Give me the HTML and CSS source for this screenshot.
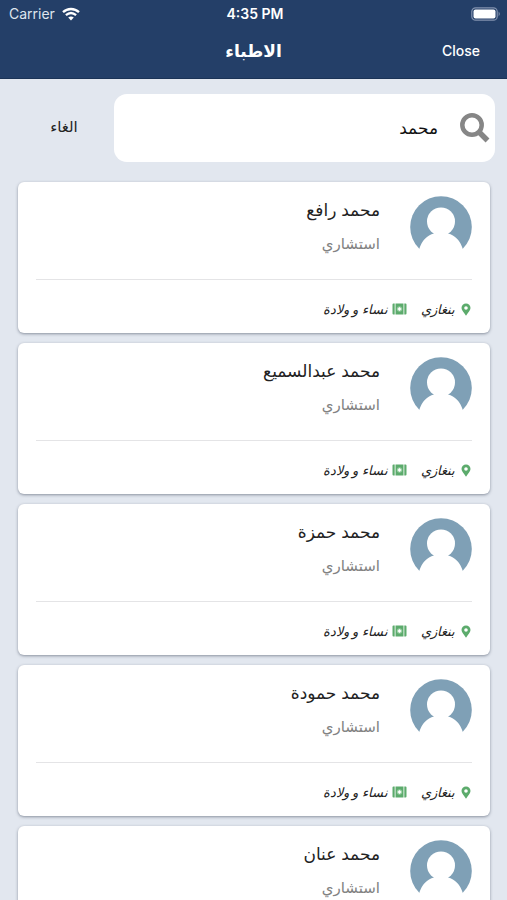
FILE: index.html
```html
<!DOCTYPE html>
<html lang="ar" dir="rtl">
<head>
<meta charset="utf-8">
<meta name="viewport" content="width=device-width, initial-scale=1">
<title>الاطباء</title>
<link rel="stylesheet" href="styles.css">
</head>
<body>
<svg class="sprite" aria-hidden="true">
  <symbol id="avatar" viewBox="0 0 62 62">
    <circle cx="31" cy="31" r="30.8" fill="#7fa0b6"/>
    <circle cx="31" cy="25.500" r="14" fill="#fff"/>
    <path d="M9 53.500C12 44 17 39.500 24 37.500V34H38V37.500C45 39.500 50 44 53 53.500V62H9Z" fill="#fff"/>
  </symbol>
  <symbol id="pin" viewBox="0 0 10 13">
    <path fill-rule="evenodd" fill="#5cab6c" d="M5 0.500A4.500 4.500 0 0 0 .5 5C.5 7.500 3 9.500 5 12.700C7 9.500 9.500 7.500 9.500 5A4.500 4.500 0 0 0 5 .5ZM5 3.200A1.800 1.800 0 1 1 5 6.800A1.800 1.800 0 0 1 5 3.200Z"/>
  </symbol>
  <symbol id="kit" viewBox="0 0 14 12">
    <path fill="#5cab6c" d="M0 1.500Q0 .5 1 .5H2.200V11.500H1Q0 11.500 0 10.500ZM11.800 .5H13Q14 .5 14 1.500V10.500Q14 11.500 13 11.500H11.800ZM3 .5H11V11.500H3Z"/>
    <circle cx="7" cy="6" r="2.700" fill="#8fcb9b"/>
    <path d="M7 4.300V7.700M5.300 6H8.700" stroke="#fff" stroke-width="1.400"/>
  </symbol>
</svg>
<header class="header">
  <div class="status" dir="ltr">
    <span class="carrier">Carrier
      <svg class="wifi" viewBox="0 0 18 14" aria-hidden="true">
        <path d="M1 5.200C5.500 .9 12.500 .9 17 5.200M3.900 8.200C7 5.500 11 5.500 14.100 8.200" fill="none" stroke="#fff" stroke-width="2.300"/>
        <path d="M6.200 10.600Q9 8.600 11.800 10.600L9 13.600Z" fill="#fff"/>
      </svg>
    </span>
    <span class="time">4:35 PM</span>
    <svg class="battery" viewBox="0 0 30 14" aria-hidden="true">
      <rect x=".8" y=".8" width="25.400" height="12.400" rx="3.800" fill="none" stroke="#8292ae" stroke-width="1.200"/>
      <rect x="2.500" y="2.500" width="22" height="9" rx="2" fill="#fff"/>
      <path d="M27.600 4.600Q30 7 27.600 9.400Z" fill="#8292ae"/>
    </svg>
  </div>
  <div class="titlebar">
    <button class="close" type="button">Close</button>
    <h1 class="title">الاطباء</h1>
  </div>
</header>
<main>
  <form class="search" role="search">
    <div class="search-box">
      <label class="search-label" for="q" aria-label="بحث">
        <svg class="search-icon" viewBox="0 0 30 30" aria-hidden="true">
          <circle cx="12" cy="12" r="9.700" fill="none" stroke="#868686" stroke-width="4.500"/>
          <path d="M19 19L27.500 27.500" stroke="#868686" stroke-width="5.500"/>
        </svg>
      </label>
      <input class="search-input" id="q" type="text" value="محمد">
    </div>
    <button class="cancel" type="button">الغاء</button>
  </form>
  <ul class="list">
    <li class="card">
      <div class="person">
        <svg class="avatar" aria-hidden="true"><use href="#avatar"/></svg>
        <div><h2 class="name">محمد رافع</h2><p class="rank">استشاري</p></div>
      </div>
      <div class="meta">
        <svg class="pin" aria-hidden="true"><use href="#pin"/></svg><span class="city">بنغازي</span>
        <svg class="kit" aria-hidden="true"><use href="#kit"/></svg><span>نساء و ولادة</span>
      </div>
    </li>
    <li class="card">
      <div class="person">
        <svg class="avatar" aria-hidden="true"><use href="#avatar"/></svg>
        <div><h2 class="name">محمد عبدالسميع</h2><p class="rank">استشاري</p></div>
      </div>
      <div class="meta">
        <svg class="pin" aria-hidden="true"><use href="#pin"/></svg><span class="city">بنغازي</span>
        <svg class="kit" aria-hidden="true"><use href="#kit"/></svg><span>نساء و ولادة</span>
      </div>
    </li>
    <li class="card">
      <div class="person">
        <svg class="avatar" aria-hidden="true"><use href="#avatar"/></svg>
        <div><h2 class="name">محمد حمزة</h2><p class="rank">استشاري</p></div>
      </div>
      <div class="meta">
        <svg class="pin" aria-hidden="true"><use href="#pin"/></svg><span class="city">بنغازي</span>
        <svg class="kit" aria-hidden="true"><use href="#kit"/></svg><span>نساء و ولادة</span>
      </div>
    </li>
    <li class="card">
      <div class="person">
        <svg class="avatar" aria-hidden="true"><use href="#avatar"/></svg>
        <div><h2 class="name">محمد حمودة</h2><p class="rank">استشاري</p></div>
      </div>
      <div class="meta">
        <svg class="pin" aria-hidden="true"><use href="#pin"/></svg><span class="city">بنغازي</span>
        <svg class="kit" aria-hidden="true"><use href="#kit"/></svg><span>نساء و ولادة</span>
      </div>
    </li>
    <li class="card">
      <div class="person">
        <svg class="avatar" aria-hidden="true"><use href="#avatar"/></svg>
        <div><h2 class="name">محمد عنان</h2><p class="rank">استشاري</p></div>
      </div>
      <div class="meta">
        <svg class="pin" aria-hidden="true"><use href="#pin"/></svg><span class="city">بنغازي</span>
        <svg class="kit" aria-hidden="true"><use href="#kit"/></svg><span>نساء و ولادة</span>
      </div>
    </li>
  </ul>
</main>
</body>
</html>
```
FILE: styles.css
```css
* {
  box-sizing: border-box;
}

html {
  height: 100%;
  overflow: hidden;
}

body {
  height: 100%;
  margin: 0;
  display: flex;
  flex-direction: column;
  background: #e2e7ef;
  color: #222;
  font-family: Inter, "DejaVu Sans", sans-serif;
  font-size: 16px;
}

button,
input {
  padding: 0;
  border: 0;
  background: none;
  color: inherit;
  font: inherit;
}

svg {
  display: block;
  flex: none;
}

.sprite {
  position: absolute;
  width: 0;
  height: 0;
}

.header {
  flex: none;
  background: #243f68;
  border-bottom: 1px solid #1b3356;
  color: #fff;
}

.status {
  display: grid;
  grid-template-columns: 1fr auto 1fr;
  align-items: center;
  height: 27px;
  padding: 0 6px 0 9px;
  font-size: 14px;
}

.carrier {
  display: flex;
  align-items: center;
  gap: 7px;
  color: #dfe5ee;
}

.wifi {
  width: 18px;
  height: 14px;
}

.time {
  font-weight: 600;
}

.battery {
  justify-self: end;
  width: 30px;
  height: 14px;
}

.titlebar {
  display: grid;
  grid-template-columns: 1fr auto 1fr;
  align-items: center;
  height: 51px;
  padding: 0 27px 4px;
}

.close {
  justify-self: start;
  font-size: 14px;
  font-weight: 500;
}

.title {
  margin: 0;
  font-size: 17px;
  font-weight: 700;
}

main {
  flex: 1;
  min-height: 0;
  overflow: hidden;
}

.search {
  display: flex;
  padding: 15px 12px 20px 0;
}

.search-box {
  display: flex;
  flex: 1;
  align-items: center;
  gap: 22px;
  min-width: 0;
  height: 68px;
  padding: 0 5px;
  border-radius: 13px;
  background: #fff;
}

.search-icon {
  width: 30px;
  height: 30px;
}

.search-input {
  flex: 1;
  min-width: 0;
  height: 100%;
  outline: 0;
  color: #111;
  font-size: 17px;
}

.cancel {
  width: 114px;
  padding: 0 0 4px 14px;
  font-size: 15px;
}

.list {
  display: flex;
  flex-direction: column;
  gap: 10px;
  margin: 0;
  padding: 0 17px 20px 18px;
  list-style: none;
}

.card {
  padding: 14px 18px 0;
  border-radius: 6px;
  background: #fff;
  box-shadow: 0 1px 3px rgba(50, 60, 80, 0.5);
}

.person {
  display: flex;
  gap: 30px;
  height: 84px;
  border-bottom: 1px solid #e4e4e6;
}

.avatar {
  width: 62px;
  height: 62px;
}

.name,
.rank {
  margin: 0;
  font-weight: 400;
  line-height: 28px;
}

.name {
  font-size: 17px;
}

.rank {
  margin-top: 6px;
  color: #828282;
  font-size: 15px;
}

.meta {
  display: flex;
  align-items: center;
  height: 53px;
  padding-top: 5px;
  font-size: 13px;
  font-style: italic;
}

.meta span {
  margin-right: 4px;
}

.meta .city {
  margin-right: 6px;
}

.pin {
  width: 10px;
  height: 13px;
  margin-right: 1px;
}

.kit {
  width: 15px;
  height: 12px;
  margin-right: 14px;
}
```
